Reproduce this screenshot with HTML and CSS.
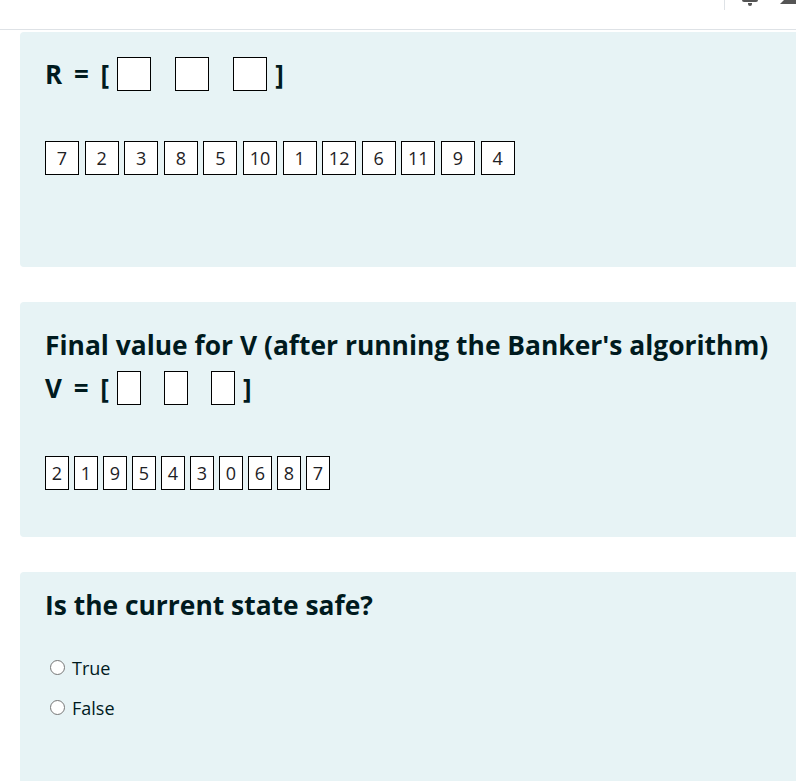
FILE: index.html
```html
<!DOCTYPE html>
<html>
<head>
<meta charset="utf-8">
<link rel="stylesheet" href="styles.css">
</head>
<body>
<header class="topbar">
  <div class="sep"></div>
  <div class="bell"><span class="bell-base"></span><span class="bell-dot"></span></div>
  <div class="chat"></div>
</header>
<main class="page">
  <section class="card">
    <div class="vec"><span class="lbl">R = [</span><span class="drop wide"></span><span class="drop wide"></span><span class="drop wide"></span><span class="lbl">]</span></div>
    <div class="chips">
      <span class="chip wide">7</span><span class="chip wide">2</span><span class="chip wide">3</span><span class="chip wide">8</span><span class="chip wide">5</span><span class="chip wide">10</span><span class="chip wide">1</span><span class="chip wide">12</span><span class="chip wide">6</span><span class="chip wide">11</span><span class="chip wide">9</span><span class="chip wide">4</span>
    </div>
  </section>
  <section class="card">
    <h3 class="title">Final value for V (after running the Banker's algorithm)</h3>
    <div class="vec vec2"><span class="lbl">V = [</span><span class="drop narrow"></span><span class="drop narrow"></span><span class="drop narrow"></span><span class="lbl">]</span></div>
    <div class="chips chips2">
      <span class="chip narrow">2</span><span class="chip narrow">1</span><span class="chip narrow">9</span><span class="chip narrow">5</span><span class="chip narrow">4</span><span class="chip narrow">3</span><span class="chip narrow">0</span><span class="chip narrow">6</span><span class="chip narrow">8</span><span class="chip narrow">7</span>
    </div>
  </section>
  <section class="card card3">
    <h3 class="title">Is the current state safe?</h3>
    <div class="options">
      <label class="opt"><span class="radio"></span>True</label>
      <label class="opt"><span class="radio"></span>False</label>
    </div>
  </section>
</main>
</body>
</html>
```
FILE: styles.css
```css
html, body { margin: 0; padding: 0; overflow: hidden; background: #fff; }
body { font-family: "Open Sans", "Noto Sans", sans-serif; color: #001a1e; width: 796px; height: 781px; }
.topbar { height: 29px; border-bottom: 1px solid #dee2e6; position: relative; }
.sep { position: absolute; left: 724px; top: 0; width: 1px; height: 10px; background: #dee2e6; }
.bell-base { position: absolute; left: 742px; top: 0; width: 16px; height: 2px; background: #555; border-radius: 0 0 2px 2px; }
.bell-dot { position: absolute; left: 748px; top: 3px; width: 4px; height: 3px; background: #555; border-radius: 0 0 3px 3px; }
.chat { position: absolute; left: 780px; top: 0; width: 20px; height: 4px; background: #555; clip-path: polygon(4px 0, 100% 0, 100% 100%, 0 100%); }
.page { padding-top: 2px; }
.card { margin: 0 0 35px 20px; width: 820px; height: 210px; box-sizing: content-box; background: #e7f3f5; border-radius: 4px; padding: 25px 0 0 25px; }
.card3 { height: 300px; padding-top: 15px; }
.vec { display: flex; align-items: center; font-weight: 700; font-size: 26px; height: 34px; }
.lbl { white-space: pre; word-spacing: 5px; }
.drop { box-sizing: border-box; height: 34px; border: 1px solid #000; background: #fff; margin-right: 24px; }
.drop.wide { width: 34px; }
.drop.narrow { width: 24px; margin-right: 23px; }
.vec .lbl:first-child { margin-right: 8px; }
.drop:nth-last-child(2) { margin-right: 8px; }
.chips { display: flex; gap: 5.6px; margin-top: 50px; }
.chip { box-sizing: border-box; height: 34px; border: 1px solid #000; background: #fff; display: flex; align-items: center; justify-content: center; font-size: 18px; color: #1d2125; }
.chip.wide { width: 34px; }
.chip.narrow { width: 24px; }
.chips2 { gap: 5px; margin-top: 51px; }
.title { margin: 3px 0 0; font-size: 26.4px; font-weight: 700; line-height: 1.2; }
.vec2 { margin-top: 9px; }
.options { margin-top: 34px; display: flex; flex-direction: column; gap: 16px; }
.opt { display: flex; align-items: center; font-size: 18px; height: 24px; }
.radio { box-sizing: border-box; width: 15px; height: 15px; border: 1px solid #767676; border-radius: 50%; background: #fff; margin: 0 7px 0 5px; }
```
